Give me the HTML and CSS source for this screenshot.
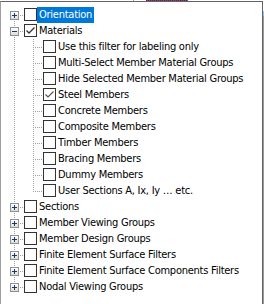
FILE: index.html
```html
<!DOCTYPE html>
<html>
<head>
<meta charset="utf-8">
<link rel="stylesheet" href="styles.css">
</head>
<body>
<div class="under"><span class="tick"></span><span class="ul"></span></div>
<div class="frame">
<div class="popup">
  <div class="tree">
    <div class="row"><span class="cell first"><span class="exp plus"></span></span><span class="cb"></span><span class="lbl sel">Orientation</span></div>
    <div class="row"><span class="cell tee"><span class="exp minus"></span></span><span class="cb on"><svg width="11" height="11" viewBox="0 0 11 11"><path d="M1.5 5.5 L4 8 L9.5 2.5" fill="none" stroke="#333" stroke-width="1.3"/></svg></span><span class="lbl">Materials</span></div>
    <div class="row"><span class="cell pass"></span><span class="cell tee"></span><span class="cb"></span><span class="lbl">Use this filter for labeling only</span></div>
    <div class="row"><span class="cell pass"></span><span class="cell tee"></span><span class="cb"></span><span class="lbl">Multi-Select Member Material Groups</span></div>
    <div class="row"><span class="cell pass"></span><span class="cell tee"></span><span class="cb"></span><span class="lbl">Hide Selected Member Material Groups</span></div>
    <div class="row"><span class="cell pass"></span><span class="cell tee"></span><span class="cb on"><svg width="11" height="11" viewBox="0 0 11 11"><path d="M1.5 5.5 L4 8 L9.5 2.5" fill="none" stroke="#555" stroke-width="1.2"/></svg></span><span class="lbl">Steel Members</span></div>
    <div class="row"><span class="cell pass"></span><span class="cell tee"></span><span class="cb"></span><span class="lbl">Concrete Members</span></div>
    <div class="row"><span class="cell pass"></span><span class="cell tee"></span><span class="cb"></span><span class="lbl">Composite Members</span></div>
    <div class="row"><span class="cell pass"></span><span class="cell tee"></span><span class="cb"></span><span class="lbl">Timber Members</span></div>
    <div class="row"><span class="cell pass"></span><span class="cell tee"></span><span class="cb"></span><span class="lbl">Bracing Members</span></div>
    <div class="row"><span class="cell pass"></span><span class="cell tee"></span><span class="cb"></span><span class="lbl">Dummy Members</span></div>
    <div class="row"><span class="cell pass"></span><span class="cell last"></span><span class="cb"></span><span class="lbl">User Sections A, Ix, Iy … etc.</span></div>
    <div class="row"><span class="cell tee"><span class="exp plus"></span></span><span class="cb"></span><span class="lbl">Sections</span></div>
    <div class="row"><span class="cell tee"><span class="exp plus"></span></span><span class="cb"></span><span class="lbl">Member Viewing Groups</span></div>
    <div class="row"><span class="cell tee"><span class="exp plus"></span></span><span class="cb"></span><span class="lbl">Member Design Groups</span></div>
    <div class="row"><span class="cell tee"><span class="exp plus"></span></span><span class="cb"></span><span class="lbl">Finite Element Surface Filters</span></div>
    <div class="row"><span class="cell tee"><span class="exp plus"></span></span><span class="cb"></span><span class="lbl">Finite Element Surface Components Filters</span></div>
    <div class="row"><span class="cell last"><span class="exp plus"></span></span><span class="cb"></span><span class="lbl">Nodal Viewing Groups</span></div>
  </div>
</div>
<div class="strip"></div>
</div>
</body>
</html>
```

FILE: styles.css
```css
html, body {
  margin: 0;
  padding: 0;
  background: #ffffff;
}
body {
  width: 264px;
  height: 304px;
  overflow: hidden;
  font-family: "DejaVu Sans Condensed", "DejaVu Sans", sans-serif;
  font-stretch: condensed;
  font-size: 11px;
  letter-spacing: -0.25px;
  color: #000;
}
.under {
  height: 1px;
  display: flex;
}
.tick {
  width: 1px;
  height: 1px;
  margin-left: 133px;
  background: #a0a0a0;
}
.ul {
  width: 42px;
  height: 1px;
  margin-left: 12px;
  background: repeating-linear-gradient(to right, #a01010 0 1px, #4060c0 1px 2px);
}
.frame {
  display: flex;
  height: 303px;
}
.popup {
  flex: none;
  width: 263px;
  height: 303px;
  border-left: 1px solid #a0a0a0;
  border-top: 1px solid #646464;
  border-right: 1px solid #646464;
  background: #fff;
  box-sizing: border-box;
  overflow: hidden;
}
.strip {
  flex: none;
  width: 1px;
  height: 303px;
  background: linear-gradient(to bottom, #ffffff 0 10px, #8ec5ee 10px 15px, #9a9a9a 15px);
}
.tree {
  padding-top: 5px;
  padding-left: 4px;
  display: flex;
  flex-direction: column;
}
.row {
  height: 16px;
  display: flex;
  align-items: flex-start;
  white-space: nowrap;
}
.cell {
  flex: none;
  width: 19px;
  height: 16px;
  display: flex;
  justify-content: center;
  align-items: flex-start;
  background-repeat: no-repeat;
  --vdot: repeating-linear-gradient(to bottom, #a0a0a0 0 1px, transparent 1px 2px);
  --hdot: repeating-linear-gradient(to right, #a0a0a0 0 1px, transparent 1px 2px);
}
.cell.pass {
  background-image: var(--vdot);
  background-size: 1px 16px;
  background-position: 9px 0;
}
.cell.tee {
  background-image: var(--vdot), var(--hdot);
  background-size: 1px 16px, 10px 1px;
  background-position: 9px 0, 9px 8px;
}
.cell.first {
  background-image: var(--vdot), var(--hdot);
  background-size: 1px 8px, 10px 1px;
  background-position: 9px 8px, 9px 8px;
}
.cell.last {
  background-image: var(--vdot), var(--hdot);
  background-size: 1px 9px, 10px 1px;
  background-position: 9px 0, 9px 8px;
}
.exp {
  margin-top: 4px;
  width: 9px;
  height: 9px;
  box-sizing: border-box;
  border: 1px solid #919191;
  background-color: #f4f4f4;
  background-repeat: no-repeat;
}
.exp.plus {
  background-image: linear-gradient(#1e395b, #1e395b), linear-gradient(#1e395b, #1e395b), linear-gradient(#fff, #dcdcdc);
  background-size: 5px 1px, 1px 5px, 100% 100%;
  background-position: 1px 3px, 3px 1px, 0 0;
}
.exp.minus {
  background-image: linear-gradient(#1e395b, #1e395b), linear-gradient(#fff, #dcdcdc);
  background-size: 5px 1px, 100% 100%;
  background-position: 1px 3px, 0 0;
}
.cb {
  flex: none;
  width: 13px;
  height: 13px;
  margin-top: 1px;
  box-sizing: border-box;
  border: 1px solid #333;
  background: #fff;
  display: flex;
}
.cb svg {
  display: block;
}
.lbl {
  height: 16px;
  line-height: 16px;
  padding: 0 2px;
}
.lbl.sel {
  background: #0078d7;
  color: #fff;
}
```
